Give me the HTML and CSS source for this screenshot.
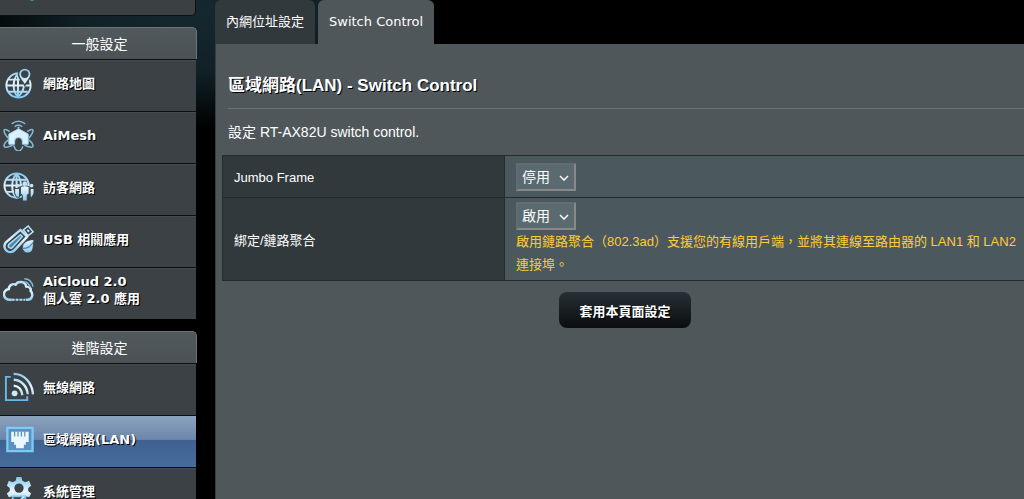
FILE: index.html
```html
<!DOCTYPE html>
<html lang="zh-Hant">
<head>
    <meta charset="UTF-8">
    <meta name="viewport" content="width=device-width, initial-scale=1.0">
    <title>區域網路(LAN) - Switch Control</title>
    <link rel="stylesheet" href="styles.css">
</head>
<body>
    <svg class="defs" aria-hidden="true">
        <linearGradient id="ice" gradientUnits="userSpaceOnUse" x1="0" y1="0" x2="0" y2="32">
            <stop offset="0" stop-color="#7cc4ec"/>
            <stop offset="0.5" stop-color="#e6f6ff"/>
            <stop offset="1" stop-color="#74c0ee"/>
        </linearGradient>
    </svg>
    <div class="layout">
        <nav class="sidebar">
            <div class="menu-end">
                <svg class="icon-end" viewBox="0 0 6 2"><path d="M1 0h4l-1 1h-2z" fill="#4f86ab"/></svg>
            </div>

            <h2 class="menu-title">一般設定</h2>
            <ul class="menu">
                <li><a href="#">
                    <svg class="icon" viewBox="0 0 32 32">
                        <g class="line">
                            <circle cx="16" cy="18" r="12.500"/>
                            <path d="M15.500 6C9.500 12 9.500 24 15.500 30C21.500 24 22 20 21.500 16M15.500 5.500v25M3.500 18h25M5.500 12h12M5.500 24.500h20"/>
                        </g>
                        <path d="M22.500 0a6.500 6.500 0 0 1 6.500 6.500c0 4.500-4 6.500-6.500 11.500c-2.500-5-6.500-7-6.500-11.500A6.500 6.500 0 0 1 22.500 0z" fill="url(#ice)" stroke="#3b4144" stroke-width="1.400"/>
                        <circle cx="22.500" cy="6.500" r="3.800" fill="#3b4144"/>
                    </svg>
                    <span>網路地圖</span>
                </a></li>
                <li><a href="#">
                    <svg class="icon" viewBox="0 0 32 32">
                        <path d="M16 9l10 5.500v10.500h-6v-3a4 4 0 0 0-8 0v3H6V14.500z" fill="#d9f2ff" stroke="#9fd8f8" stroke-linejoin="round"/>
                        <g class="thin">
                            <path d="M9 4q7-5.500 14 0M12 7q4-3.500 8 0"/>
                            <path d="M7 12C1 8 0 10 2 14q1.500 3 4 5M25 12c6-4 7-2 5 2q-1.500 3-4 5"/>
                            <path d="M6 20c-5 4-6 7-4 8 2 .5 5-1 8-2M26 20c5 4 6 7 4 8-2 .5-5-1-8-2M11 26c1 3.500 3 6 5 6s3.500-2 4.500-5"/>
                        </g>
                        <circle cx="16" cy="8" r="1" fill="#9fd8f8"/>
                    </svg>
                    <span>AiMesh</span>
                </a></li>
                <li><a href="#">
                    <svg class="icon" viewBox="0 0 32 32">
                        <g class="line">
                            <circle cx="14" cy="14" r="12.500"/>
                            <path d="M14 1.500C8 8 8 21 14 26.500C20 21 20 8 14 1.500M14 1.500v25M1.500 14h25M3.500 8h21M3.500 20.500h21"/>
                        </g>
                        <path d="M18 15q4.500-2 9 0v7l-2 2v6h-5v-6l-2-2zM12 17h5v9h-3l-2-4zM28 17h4v5l-2 4h-2z" fill="url(#ice)" stroke="#3b4144" stroke-width="1"/>
                        <g fill="#bfe6fb"><circle cx="22.500" cy="12" r="2.400"/><circle cx="15" cy="14" r="1.900"/><circle cx="29.500" cy="14" r="1.900"/></g>
                    </svg>
                    <span>訪客網路</span>
                </a></li>
                <li><a href="#">
                    <svg class="icon" viewBox="0 0 32 32">
                        <path d="M21 6l5-4 5 6-5 4z" fill="none" stroke="#bfe6fb" stroke-width="1.500"/>
                        <path d="M25 6l2 2" stroke="#bfe6fb" stroke-width="2"/>
                        <path d="M18 6l7 7-13 14a6 6 0 0 1-9-8z" fill="none" stroke="url(#ice)" stroke-width="2.500" stroke-linejoin="round"/>
                        <path d="M18 11l2 2-10 11a2.500 2.500 0 0 1-4-3z" fill="#4f89ad" stroke="#a8ddf9" stroke-width="1.500"/>
                        <path d="M32 16c-8 0-12 4-12 8a5.500 5.500 0 0 0 11 1z" fill="url(#ice)" stroke="#3b4144" stroke-width="1"/>
                        <path d="M20 25q7 1 11-6" fill="none" stroke="#4f89ad" stroke-width="1.200"/>
                    </svg>
                    <span>USB 相關應用</span>
                </a></li>
                <li><a href="#" class="two-lines">
                    <svg class="icon" viewBox="0 0 32 32">
                        <path d="M9 26.500H7a5.500 5.500 0 0 1-1-11c0-4 4-6 7-4.500 2-4 10-4 11 2 4 0 5 2 4.500 4.500 3 3 2 9-3 9h-2" fill="none" stroke="url(#ice)" stroke-width="2.500"/>
                        <path d="M9 26.500h14" stroke="#b8dff4" stroke-width="2" stroke-dasharray="3 1"/>
                        <g class="thin"><path d="M22 5q7 0 9 8M22 8q5 1 6 6"/></g>
                    </svg>
                    <span>AiCloud 2.0<br>個人雲 2.0 應用</span>
                </a></li>
            </ul>

            <h2 class="menu-title">進階設定</h2>
            <ul class="menu">
                <li><a href="#">
                    <svg class="icon" viewBox="0 0 32 32">
                        <g fill="none" stroke="url(#ice)" stroke-width="2.400">
                            <path d="M8 5H3v24h22v-4" stroke="#68b9e5" stroke-width="2"/>
                            <path d="M11 2C22 2 30 11 31 23M11 8C19 8 25 15 25.500 23M11 14q8 1 9 10"/>
                        </g>
                        <circle cx="12" cy="22" r="3" fill="#c9ecff"/>
                    </svg>
                    <span>無線網路</span>
                </a></li>
                <li><a href="#" class="selected">
                    <svg class="icon" viewBox="0 0 32 32">
                        <path d="M4.500 4h26v24h-26z" fill="#5b8fbd" stroke="#7ccbf7" stroke-width="2.400"/>
                        <path d="M8.500 8h18v10.500h-3v3h-2V25h-8v-3.500h-2v-3h-3z" fill="#e9f8ff"/>
                        <path d="M12 8v5M15.500 8v5M19 8v5M22.500 8v5" stroke="#5b8fbd" stroke-width="1.300"/>
                    </svg>
                    <span>區域網路(LAN)</span>
                </a></li>
                <li><a href="#">
                    <svg class="icon" viewBox="0 0 32 32">
                        <path d="M14 1h5l1 4 3 1.500 4-1.500 2 5-3 2.500v3l3 2.500-2 4-4-1-3 1.500-1 3h-5l-1-3-3-1.500-4 1-2-4 3-2.500v-3L4 10l2-5 4 1.500L13 5z" fill="url(#ice)"/>
                        <circle cx="16.500" cy="12.500" r="4.800" fill="#3b4144"/>
                        <path d="M10 21h13v10H10z" fill="#3b4144" stroke="#7cc4ec" stroke-width="2"/>
                        <path d="M14 29l8-8" stroke="#c9ecff" stroke-width="2"/>
                    </svg>
                    <span>系統管理</span>
                </a></li>
            </ul>
        </nav>

        <main class="content">
            <div class="tabs">
                <a href="#" class="tab">內網位址設定</a>
                <a href="#" class="tab active">Switch Control</a>
            </div>
            <form class="panel">
                <h1 class="page-title">區域網路(LAN) - Switch Control</h1>
                <p class="description">設定 RT-AX82U switch control.</p>
                <table class="form-table">
                    <tr>
                        <th scope="row"><label for="jumbo">Jumbo Frame</label></th>
                        <td>
                            <div class="select-box">
                                <select id="jumbo">
                                    <option>停用</option>
                                    <option>啟用</option>
                                </select>
                                <svg class="chevron" viewBox="0 0 10 6"><path d="M1 1l4 4 4-4"/></svg>
                            </div>
                        </td>
                    </tr>
                    <tr class="bonding">
                        <th scope="row"><label for="lacp">綁定/鏈路聚合</label></th>
                        <td>
                            <div class="select-box">
                                <select id="lacp">
                                    <option>啟用</option>
                                    <option>停用</option>
                                </select>
                                <svg class="chevron" viewBox="0 0 10 6"><path d="M1 1l4 4 4-4"/></svg>
                            </div>
                            <div class="hint">啟用鏈路聚合（802.3ad）支援您的有線用戶端，並將其連線至路由器的 LAN1 和 LAN2 連接埠。</div>
                        </td>
                    </tr>
                </table>
                <div class="apply">
                    <button type="button" class="apply-button">套用本頁面設定</button>
                </div>
            </form>
        </main>
    </div>
</body>
</html>
```
FILE: styles.css
```css
* {
    box-sizing: border-box;
}
body {
    margin: 0;
    height: 100vh;
    overflow: hidden;
    background: #000 radial-gradient(ellipse 240px 120px at 200px 10px, #14292f 0%, #102127 50%, #000 100%) no-repeat;
    color: #fff;
    font-family: "Liberation Sans", Arial, "Noto Sans CJK TC", sans-serif;
    font-size: 13px;
}
a {
    color: #fff;
    text-decoration: none;
}
.defs {
    position: absolute;
    width: 0;
    height: 0;
}
.layout {
    display: grid;
    grid-template-columns: 197px minmax(0, 1fr);
    column-gap: 18px;
    height: 100vh;
}

/* Side menu */
.sidebar {
    overflow: hidden;
    font-family: "DejaVu Sans", Verdana, "Noto Sans CJK TC", sans-serif;
}
.menu-end {
    width: 196px;
    height: 16px;
    margin-bottom: 11px;
    padding-left: 29px;
    background-color: #3b4042;
    border-bottom: 1px solid #111;
    border-right: 1px solid #111;
    border-bottom-right-radius: 5px;
}
.icon-end {
    display: block;
    width: 6px;
    height: 2px;
}
.menu-title {
    margin: 0;
    height: 32px;
    padding-left: 3px;
    line-height: 32px;
    font-size: 14px;
    font-weight: normal;
    text-align: center;
    background: linear-gradient(#52595d, #4b5256);
    border-top: 1px solid #6c7478;
    border-right: 1px solid #6c7478;
    border-top-right-radius: 5px;
}
.menu {
    list-style: none;
    margin: 0 0 12px;
    padding: 0;
    width: 196px;
}
.menu a {
    display: flex;
    align-items: center;
    gap: 9px;
    height: 52px;
    padding: 0 0 5px 3px;
    background-color: #3b4144;
    border-top: 1px solid #0c0e0f;
    box-shadow: inset 0 1px #444a4d;
    font-weight: bold;
    line-height: 17px;
    text-shadow: 1px 1px 0 #000;
}
.menu a.two-lines {
    padding-bottom: 8px;
}
.menu a.selected {
    background: linear-gradient(#8ca3be 0%, #6c86aa 46%, #40618f 47%, #456d9d 100%);
    box-shadow: none;
}
.icon {
    flex: none;
    width: 31px;
    height: 31px;
}
.icon .line {
    fill: none;
    stroke: url(#ice);
    stroke-width: 2;
}
.icon .thin {
    fill: none;
    stroke: #86b8d3;
    stroke-width: 1.6;
}

/* Content */
.content {
    display: flex;
    flex-direction: column;
}
.tabs {
    display: flex;
    gap: 3px;
    font-family: "DejaVu Sans", Verdana, "Noto Sans CJK TC", sans-serif;
}
.tab {
    height: 44px;
    padding: 0 11px;
    line-height: 43px;
    background-color: #32393c;
    border-radius: 6px 6px 0 0;
}
.tab.active {
    background-color: #4f575b;
}
.panel {
    flex: 1;
    padding: 30px 0 0 6px;
    background-color: #4f575b;
    border-left: 1px solid #353d41;
}
.page-title {
    margin: 0 0 0 6px;
    padding-bottom: 10px;
    line-height: 24px;
    font-size: 17px;
    text-shadow: 1px 1px 0 #000;
    border-bottom: 1px solid #697277;
}
.description {
    margin: 13px 6px;
    line-height: 20px;
    font-size: 14px;
}
.form-table {
    width: 100%;
    border-collapse: collapse;
    border: 1px solid #262b2d;
    border-right: none;
    background-color: #4b595e;
}
.form-table th,
.form-table td {
    border: 1px solid #262b2d;
    border-right: none;
    padding: 7px 0 6px 11px;
    text-align: left;
    font-weight: normal;
}
.form-table th {
    width: 282px;
    background-color: #31393c;
}
.form-table .bonding td {
    padding: 4px 0 4px 11px;
}
.select-box {
    position: relative;
    width: 60px;
}
.select-box select {
    display: block;
    appearance: none;
    width: 100%;
    height: 28px;
    padding: 0 4px;
    border: 2px solid;
    border-color: #666b6d #898989 #898989 #666b6d;
    border-radius: 0;
    background-color: #596a70;
    color: #fff;
    font-family: inherit;
    font-size: 14px;
}
.chevron {
    position: absolute;
    right: 7px;
    top: 12px;
    width: 10px;
    height: 6px;
    fill: none;
    stroke: #fff;
    stroke-width: 1.5;
    pointer-events: none;
}
.hint {
    color: #fc3;
    line-height: 23px;
}
.apply {
    padding: 11px 0 0 4px;
    text-align: center;
}
.apply-button {
    width: 132px;
    height: 36px;
    padding: 0;
    border: 0;
    border-radius: 8px;
    background: linear-gradient(#253135, #0b0d0e);
    color: #fff;
    font-family: inherit;
    font-size: 13px;
    font-weight: bold;
    text-shadow: 1px 1px 0 #000;
    cursor: pointer;
}
```
